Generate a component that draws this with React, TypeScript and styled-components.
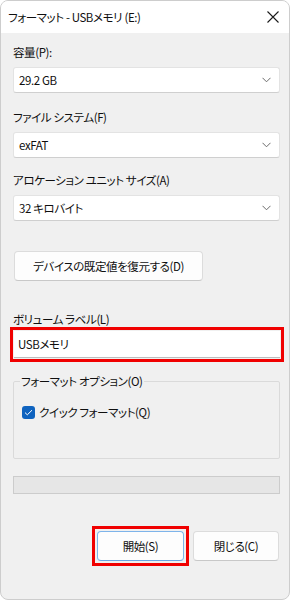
import styled, { createGlobalStyle } from "styled-components";

const GlobalStyle = createGlobalStyle`
    body {
        margin: 0;
        background: #ffffff;
        font-family: "Noto Sans CJK JP", "Noto Sans", sans-serif;
        font-feature-settings: "palt" 1;
        font-size: 11.5px;
        letter-spacing: -0.4px;
        color: #0f0f0f;
    }
`

const Window = styled.div`
    width: 290px;
    height: 600px;
    box-sizing: border-box;
    border: 1px solid #cdcdcd;
    border-radius: 8px;
    overflow: hidden;
    background: #f0f0f0;
    display: flex;
    flex-direction: column;
`

const TitleBar = styled.div`
    height: 32px;
    flex: none;
    background: #ffffff;
    display: flex;
    align-items: center;
    justify-content: space-between;
    padding: 0 8px 0 7px;
`

const CloseButton = styled.span`
    display: flex;
    width: 14px;
    height: 14px;
    margin-right: 1px;
`

const Body = styled.div`
    flex: 1;
    display: flex;
    flex-direction: column;
    padding: 10px 9px 0 12px;
`

const Label = styled.div<{ top: number }>`
    margin-top: ${(p) => p.top}px;
    height: 18px;
    line-height: 18px;
`

const Select = styled.div`
    margin-top: 6px;
    height: 26px;
    box-sizing: border-box;
    background: #ffffff;
    border: 1px solid #e3e3e3;
    border-bottom-color: #cfcfcf;
    border-radius: 3px;
    display: flex;
    align-items: center;
    justify-content: space-between;
    padding: 0 8px 0 5px;
`

const Button = styled.div<{ width: number; primary?: boolean }>`
    width: ${(p) => p.width}px;
    height: 30px;
    box-sizing: border-box;
    background: #fdfdfd;
    border: 1px solid ${(p) => (p.primary ? "#7eb4ea" : "#dcdcdc")};
    border-bottom-color: ${(p) => (p.primary ? "#6aa6e2" : "#c8c8c8")};
    border-radius: 4px;
    display: flex;
    align-items: center;
    justify-content: center;
`

const Highlight = styled.div`
    margin: -5px;
    padding: 2px;
    border: 3px solid #f00000;
`

const RestoreRow = styled.div`
    margin-top: 30px;
    padding-left: 1px;
`

const TextBox = styled.div`
    margin-top: 3px;
    margin-left: 1px;
    height: 27px;
    box-sizing: border-box;
    background: #ffffff;
    border-bottom: 1px solid #bdbdbd;
    display: flex;
    align-items: center;
    padding-left: 4px;
    outline: 3px solid #f00000;
    outline-offset: 1px;
`

const Group = styled.fieldset`
    margin: 15px 0 0;
    height: 86px;
    box-sizing: border-box;
    border: 1px solid #dadada;
    border-radius: 2px;
    padding: 15px 8px 0;
`

const Legend = styled.legend`
    padding: 0 1px;
    margin-left: -2px;
    line-height: 16px;
`

const CheckRow = styled.label`
    display: flex;
    align-items: center;
    gap: 4px;
`

const CheckBox = styled.span`
    width: 13px;
    height: 13px;
    border-radius: 3px;
    background: #0f63bf;
    display: flex;
    align-items: center;
    justify-content: center;
`

const Progress = styled.div`
    margin-top: 17px;
    height: 18px;
    box-sizing: border-box;
    background: #e6e6e6;
    border: 1px solid #cccccc;
`

const ButtonRow = styled.div`
    margin-top: 37px;
    display: flex;
    justify-content: flex-end;
    align-items: center;
    gap: 9px;
    padding-right: 1px;
`

const Chevron = () => (
    <svg width="9" height="6" viewBox="0 0 9 6">
        <path d="M0.5 0.8 L4.5 4.8 L8.5 0.8" fill="none" stroke="#6b6b6b" strokeWidth="1" />
    </svg>
)

const App = () => {
    return (
        <>
            <GlobalStyle />
            <Window>
                <TitleBar>
                    <span>フォーマット - USBメモリ (E:)</span>
                    <CloseButton>
                        <svg width="14" height="14" viewBox="0 0 14 14">
                            <path d="M1.5 1.5 L12.5 12.5 M12.5 1.5 L1.5 12.5" stroke="#1b1b1b" strokeWidth="1.1" />
                        </svg>
                    </CloseButton>
                </TitleBar>
                <Body>
                    <Label top={0}>容量(P):</Label>
                    <Select>29.2 GB<Chevron /></Select>
                    <Label top={15}>ファイル システム(F)</Label>
                    <Select>exFAT<Chevron /></Select>
                    <Label top={13}>アロケーション ユニット サイズ(A)</Label>
                    <Select>32 キロバイト<Chevron /></Select>
                    <RestoreRow>
                        <Button width={189}>デバイスの既定値を復元する(D)</Button>
                    </RestoreRow>
                    <Label top={29}>ボリューム ラベル(L)</Label>
                    <TextBox>USBメモリ</TextBox>
                    <Group>
                        <Legend>フォーマット オプション(O)</Legend>
                        <CheckRow>
                            <CheckBox>
                                <svg width="9" height="7" viewBox="0 0 9 7">
                                    <path d="M1 3.6 L3.3 5.8 L8 1.2" fill="none" stroke="#ffffff" strokeWidth="1" />
                                </svg>
                            </CheckBox>
                            クイック フォーマット(Q)
                        </CheckRow>
                    </Group>
                    <Progress />
                    <ButtonRow>
                        <Highlight>
                            <Button width={87} primary>開始(S)</Button>
                        </Highlight>
                        <Button width={86}>閉じる(C)</Button>
                    </ButtonRow>
                </Body>
            </Window>
        </>
    )
}

export default App
